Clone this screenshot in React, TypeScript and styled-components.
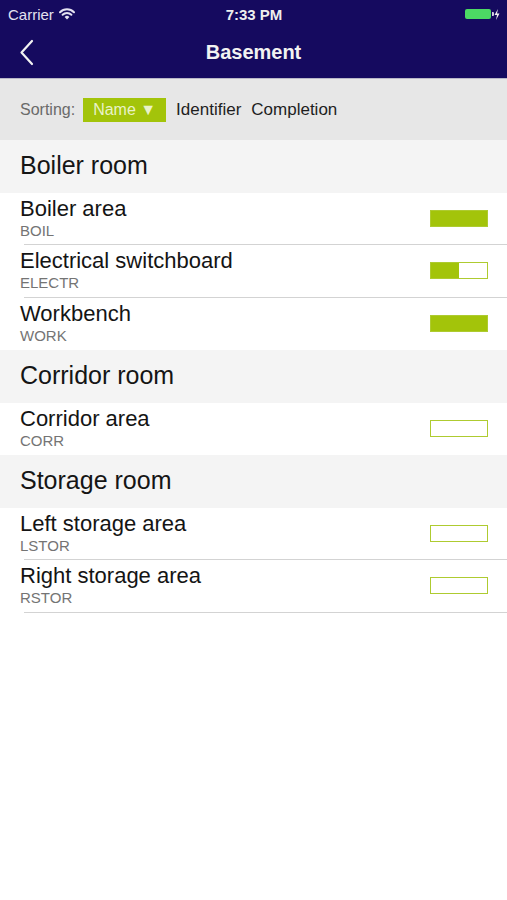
import React from "react";
import styled, { createGlobalStyle } from "styled-components";

const Global = createGlobalStyle`
  html, body { margin: 0; padding: 0; background: #ffffff; }
  body { font-family: "Liberation Sans", Arial, sans-serif; -webkit-font-smoothing: antialiased; }
`;

const Page = styled.div`
  width: 507px;
  min-height: 900px;
  background: #ffffff;
`;

const NavBar = styled.header`
  background: #150a5f;
  height: 78px;
  border-bottom: 1px solid #b9b8c8;
  color: #ffffff;
  display: flex;
  flex-direction: column;
`;

const StatusBar = styled.div`
  height: 28px;
  display: grid;
  grid-template-columns: 1fr auto 1fr;
  align-items: center;
  padding: 0 7px 0 8px;
  font-size: 15px;
`;

const Carrier = styled.div`
  display: flex;
  align-items: center;
  gap: 5px;
  color: #e4e2f0;
`;

const Clock = styled.div`
  font-weight: bold;
  font-size: 15px;
  color: #eeeeee;
`;

const BatteryWrap = styled.div`
  justify-self: end;
  display: flex;
  align-items: center;
  gap: 3px;
`;

const Battery = styled.div`
  width: 26px;
  height: 10px;
  border-radius: 2px;
  background: #4cd964;
  position: relative;
  &::after {
    content: "";
    position: absolute;
    right: -3px;
    top: 3px;
    width: 2px;
    height: 4px;
    background: #cfcfe0;
    border-radius: 0 1px 1px 0;
  }
`;

const TitleRow = styled.div`
  flex: 1;
  display: grid;
  grid-template-columns: 60px 1fr 60px;
  align-items: center;
`;

const BackButton = styled.div`
  padding-left: 19px;
  display: flex;
  align-items: center;
  padding-bottom: 2px;
`;

const Title = styled.h1`
  margin: 0;
  text-align: center;
  font-size: 20px;
  font-weight: bold;
  color: #f2f2f2;
  padding-bottom: 2px;
`;

const SortBar = styled.div`
  height: 61px;
  background: #e7e7e7;
  display: flex;
  align-items: center;
  padding-left: 20px;
  font-size: 17px;
  gap: 10px;
`;

const SortLabel = styled.span`
  color: #6a6a6a;
  font-size: 16px;
  margin-right: -2px;
`;

const SortOption = styled.span<{ $active?: boolean }>`
  color: ${(p) => (p.$active ? "#e9f2c8" : "#1e1e1e")};
  background: ${(p) => (p.$active ? "#a3c40a" : "transparent")};
  padding: ${(p) => (p.$active ? "3px 10px 3px 10px" : "0")};
  font-size: ${(p) => (p.$active ? "16px" : "17px")};
  line-height: 18px;
`;

const SectionHeader = styled.div`
  height: 52.5px;
  background: #f4f4f4;
  display: flex;
  align-items: center;
  padding-left: 20px;
  font-size: 25px;
  color: #151515;
  padding-bottom: 1px;
  box-sizing: border-box;
`;

const Row = styled.div<{ $separator: boolean }>`
  height: 52.5px;
  box-sizing: border-box;
  display: flex;
  align-items: center;
  justify-content: space-between;
  padding: 0 19px 0 20px;
  position: relative;
  background: #ffffff;
  &::after {
    content: "";
    display: ${(p) => (p.$separator ? "block" : "none")};
    position: absolute;
    left: 24px;
    right: 0;
    bottom: 0;
    height: 1px;
    background: #d3d3d3;
  }
`;

const RowText = styled.div`
  display: flex;
  flex-direction: column;
  padding-bottom: 2px;
`;

const RowTitle = styled.span`
  font-size: 22px;
  color: #141414;
  line-height: 24px;
`;

const RowCode = styled.span`
  font-size: 15px;
  color: #747474;
  line-height: 17px;
  margin-top: 1px;
`;

const Progress = styled.div`
  width: 58px;
  height: 17px;
  box-sizing: border-box;
  border: 1.5px solid #aecb30;
  background: #ffffff;
  display: flex;
  margin-bottom: 1px;
`;

const ProgressFill = styled.div`
  height: 100%;
  background: #a3c40a;
`;

type Item = { name: string; code: string; progress: number };
type Section = { title: string; items: Item[] };

const sections: Section[] = [
  {
    title: "Boiler room",
    items: [
      { name: "Boiler area", code: "BOIL", progress: 1 },
      { name: "Electrical switchboard", code: "ELECTR", progress: 0.5 },
      { name: "Workbench", code: "WORK", progress: 1 },
    ],
  },
  {
    title: "Corridor room",
    items: [{ name: "Corridor area", code: "CORR", progress: 0 }],
  },
  {
    title: "Storage room",
    items: [
      { name: "Left storage area", code: "LSTOR", progress: 0 },
      { name: "Right storage area", code: "RSTOR", progress: 0 },
    ],
  },
];

const Wifi = () => (
  <svg width="16" height="12" viewBox="0 0 16 12">
    <path d="M1 4.2 A10 10 0 0 1 15 4.2" stroke="#e4e2f0" strokeWidth="2" fill="none" strokeLinecap="round" />
    <path d="M3.6 6.8 A6.3 6.3 0 0 1 12.4 6.8" stroke="#e4e2f0" strokeWidth="2" fill="none" strokeLinecap="round" />
    <path d="M8 11.5 L5.6 9 A3.4 3.4 0 0 1 10.4 9 Z" fill="#e4e2f0" />
  </svg>
);

const Bolt = () => (
  <svg width="6" height="11" viewBox="0 0 6 11">
    <path d="M4 0 L0.5 6 H3 L2 11 L5.5 4.5 H3 Z" fill="#f0f0f0" />
  </svg>
);

const Chevron = () => (
  <svg width="16" height="27" viewBox="0 0 16 27">
    <path d="M13 2 L2.5 13.5 L13 25" stroke="#f2f2f2" strokeWidth="2.2" fill="none" strokeLinecap="round" strokeLinejoin="round" />
  </svg>
);

export default function App() {
  return (
    <Page>
      <Global />
      <NavBar>
        <StatusBar>
          <Carrier>
            Carrier <Wifi />
          </Carrier>
          <Clock>7:33 PM</Clock>
          <BatteryWrap>
            <Battery />
            <Bolt />
          </BatteryWrap>
        </StatusBar>
        <TitleRow>
          <BackButton>
            <Chevron />
          </BackButton>
          <Title>Basement</Title>
          <div />
        </TitleRow>
      </NavBar>
      <SortBar>
        <SortLabel>Sorting:</SortLabel>
        <SortOption $active>Name ▼</SortOption>
        <SortOption>Identifier</SortOption>
        <SortOption>Completion</SortOption>
      </SortBar>
      {sections.map((s, si) => (
        <React.Fragment key={s.title}>
          <SectionHeader>{s.title}</SectionHeader>
          {s.items.map((it, ii) => {
            const lastInSection = ii === s.items.length - 1;
            const lastSection = si === sections.length - 1;
            return (
              <Row key={it.code} $separator={!lastInSection || lastSection}>
                <RowText>
                  <RowTitle>{it.name}</RowTitle>
                  <RowCode>{it.code}</RowCode>
                </RowText>
                <Progress>
                  <ProgressFill style={{ width: `${it.progress * 100}%` }} />
                </Progress>
              </Row>
            );
          })}
        </React.Fragment>
      ))}
    </Page>
  );
}
